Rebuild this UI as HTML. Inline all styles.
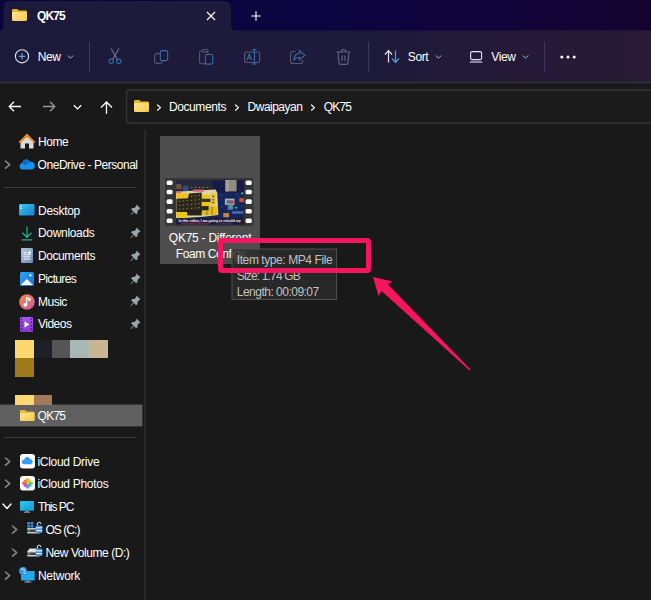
<!DOCTYPE html>
<html><head><meta charset="utf-8">
<style>
*{box-sizing:border-box;margin:0;padding:0}
html,body{width:651px;height:600px;overflow:hidden;background:#191919}
body{position:relative;font-family:"Liberation Sans","DejaVu Sans",sans-serif;color:#fff;font-size:12px}
.abs{position:absolute}
svg{overflow:visible}
#titlebar{left:0;top:0;width:651px;height:31px;background:linear-gradient(90deg,#0b0333 0%,#0d0436 50%,#130531 100%)}
#tab{left:3px;top:1px;width:228px;height:31px;background:#1d1a3b;border-radius:7px 7px 0 0}
#toolbar{left:0;top:31px;width:651px;height:50px;background:linear-gradient(90deg,#1c1a3a 0%,#1d1a3c 55%,#2a1a3e 100%)}
#tbline{left:0;top:82px;width:651px;height:1px;background:#2a2a2a}
.t{position:absolute;white-space:pre;line-height:16px;font-size:12px}
.sep{position:absolute;width:1px;background:#3d3a5a}

.hr{position:absolute;left:4px;width:132px;height:1px;background:#3a3a3a}
#vsplit{left:144px;top:130px;width:2px;height:470px;background:#282828}
#tile{left:160px;top:136px;width:100px;height:128px;background:#4d4d4d}
.pin{position:absolute;left:129.700px}
</style></head><body>
<svg class="abs" style="left:0;top:0" width="651" height="84" viewBox="0 0 651 84">
<defs><linearGradient id="gfold" x1="0" y1="0" x2="1" y2="1"><stop offset="0" stop-color="#fde48f"/><stop offset="1" stop-color="#f6c94c"/></linearGradient><linearGradient id="gtb" x1="0" x2="1" y1="0" y2="0"><stop offset="0" stop-color="#1c1a3a"/><stop offset="0.550" stop-color="#1e1a3b"/><stop offset="0.800" stop-color="#241a38"/><stop offset="1" stop-color="#291a35"/></linearGradient>
<linearGradient id="gtt" x1="0" x2="1" y1="0" y2="0"><stop offset="0" stop-color="#0b033a"/><stop offset="0.500" stop-color="#0c0440"/><stop offset="0.800" stop-color="#100338"/><stop offset="1" stop-color="#13032e"/></linearGradient></defs>
<rect x="0" y="0" width="651" height="81.700" fill="url(#gtb)"/>
<path d="M0 0H651V30.500H236Q231 30.500 231 25.500V8Q231 1 224 1H10.500Q3.500 1 3.500 8V26Q3.500 30.500 0 30.500Z" fill="url(#gtt)"/>
<rect x="0" y="81.800" width="651" height="1.400" fill="#353535"/>
</svg>
<svg class="abs" style="left:12px;top:9px" width="15" height="12" viewBox="0 0 16 13" preserveAspectRatio="none"><path d="M0 1.500a1.500 1.500 0 0 1 1.500-1.500h4l1.700 1.700h7.300a1.500 1.500 0 0 1 1.500 1.500v8.300a1.500 1.500 0 0 1-1.500 1.500h-13a1.500 1.500 0 0 1-1.500-1.500z" fill="#e9b630"/><path d="M0 4.200a1 1 0 0 1 1-1h14a1 1 0 0 1 1 1v7.300a1.500 1.500 0 0 1-1.500 1.500h-13a1.500 1.500 0 0 1-1.500-1.500z" fill="url(#gfold)"/></svg><svg class="abs" style="left:206px;top:10.500px" width="10" height="10" viewBox="0 0 10 10"><path d="M1 1l8 8M9 1l-8 8" stroke="#fff" stroke-width="1.100" fill="none"/></svg><svg class="abs" style="left:251px;top:10.500px" width="10" height="10" viewBox="0 0 10 10"><path d="M5 0.300v9.400M0.300 5h9.400" stroke="#fff" stroke-width="1.100" fill="none"/></svg><svg class="abs" style="left:14px;top:49px" width="16" height="15" viewBox="0 0 16 15"><circle cx="8" cy="7.300" r="6.600" fill="none" stroke="#e4e4ee" stroke-width="1.100"/><path d="M8 4v6.600M4.700 7.300h6.600" stroke="#5aa0e8" stroke-width="1.200"/></svg>
<svg class="abs" style="left:67px;top:54px" width="7" height="6" viewBox="0 0 7 6"><path d="M0.800 1.500l2.700 2.700 2.700-2.700" stroke="#b8b8c4" stroke-width="1" fill="none"/></svg>
<div class="sep" style="left:89px;top:41.500px;height:30px"></div>
<svg class="abs" style="left:107px;top:48px" width="16" height="17" viewBox="0 0 16 17" fill="none" stroke-width="1.100"><path d="M4 0.500l6.500 11M12 0.500l-6.500 11" stroke="#74728c"/><circle cx="4.300" cy="13.300" r="2.200" stroke="#336da8"/><circle cx="11.700" cy="13.300" r="2.200" stroke="#336da8"/></svg>
<svg class="abs" style="left:153.600px;top:49.800px" width="15" height="15" viewBox="0 0 15 15" fill="none" stroke-width="1.100"><rect x="0.600" y="3.600" width="7.500" height="9.800" rx="1.800" stroke="#595772"/><rect x="6.300" y="0.600" width="7.400" height="10" rx="1.800" stroke="#336da8" fill="#1c1a3a"/></svg>
<svg class="abs" style="left:199px;top:49px" width="15" height="16" viewBox="0 0 15 16" fill="none" stroke-width="1.100"><rect x="0.600" y="1.800" width="8.300" height="13" rx="1.800" stroke="#595772"/><rect x="3.200" y="0.500" width="5.800" height="2.400" rx="1" stroke="#595772" fill="#1c1a3a"/><rect x="6.400" y="5.500" width="7.400" height="9.600" rx="1.600" stroke="#336da8" fill="#1c1a3a"/></svg>
<svg class="abs" style="left:244px;top:50px" width="17" height="15" viewBox="0 0 17 15" fill="none" stroke-width="1.100"><rect x="0.600" y="2" width="15" height="10.500" rx="2" stroke="#595772"/><path d="M8.400 -0.500h4M8.400 14h4M10.400 -0.500v14.500" stroke="#336da8"/><path d="M3 10l2.300-6 2.300 6M3.800 8h3" stroke="#336da8"/></svg>
<svg class="abs" style="left:290px;top:50px" width="16" height="14" viewBox="0 0 16 14" fill="none" stroke-width="1.100"><path d="M5.500 1.500h-3a2 2 0 0 0-2 2v8a2 2 0 0 0 2 2h8a2 2 0 0 0 2-2v-1.500" stroke="#595772"/><path d="M9.500 0.800l5.500 4.500-5.500 4.500v-2.600c-3 0-4.500 1-5.500 2.800 0-3.500 2-6.300 5.500-6.500z" stroke="#336da8"/></svg>
<svg class="abs" style="left:336px;top:48.500px" width="15" height="16" viewBox="0 0 15 16" fill="none" stroke="#67657e" stroke-width="1.100"><path d="M0.500 3h14M5 3a2.500 2.500 0 0 1 5 0M2 3l1 11a1.500 1.500 0 0 0 1.500 1.400h6a1.500 1.500 0 0 0 1.500-1.400l1-11M6 6.500v5.500M9 6.500v5.500"/></svg>
<div class="sep" style="left:368px;top:41.500px;height:30px"></div>
<svg class="abs" style="left:384px;top:50px" width="17" height="13" viewBox="0 0 17 13" fill="none" stroke-width="1.200"><path d="M4.500 12.500v-11.500M1 4.500l3.500-3.800 3.500 3.800" stroke="#e4e4ee"/><path d="M11.500 0.500v11.500M8 8.500l3.500 3.800 3.500-3.800" stroke="#4aa3ea"/></svg>
<svg class="abs" style="left:434.500px;top:54px" width="7" height="6" viewBox="0 0 7 6"><path d="M0.800 1.500l2.700 2.700 2.700-2.700" stroke="#b8b8c4" stroke-width="1" fill="none"/></svg>
<svg class="abs" style="left:468.500px;top:51px" width="15" height="12" viewBox="0 0 15 12" fill="none" stroke="#e4e4ee" stroke-width="1.100"><rect x="1.600" y="0.600" width="11" height="8" rx="1.500"/><path d="M0.800 11h12.600"/></svg>
<svg class="abs" style="left:521.500px;top:54px" width="7" height="6" viewBox="0 0 7 6"><path d="M0.800 1.500l2.700 2.700 2.700-2.700" stroke="#b8b8c4" stroke-width="1" fill="none"/></svg>
<div class="sep" style="left:544px;top:41.500px;height:30px"></div>
<svg class="abs" style="left:560px;top:55px" width="16" height="4" viewBox="0 0 16 4" fill="#fff"><circle cx="1.800" cy="2" r="1.500"/><circle cx="8" cy="2" r="1.500"/><circle cx="14.200" cy="2" r="1.500"/></svg>
<svg class="abs" style="left:8px;top:101px" width="14" height="11" viewBox="0 0 14 11" fill="none" stroke="#fff" stroke-width="1.300"><path d="M13 5.500h-11.500M6 0.700l-4.800 4.800 4.800 4.800"/></svg>
<svg class="abs" style="left:41.500px;top:101px" width="14" height="11" viewBox="0 0 14 11" fill="none" stroke="#9a9a9a" stroke-width="1.300"><path d="M1 5.500h11.500M8 0.700l4.800 4.800-4.800 4.800"/></svg>
<svg class="abs" style="left:72.500px;top:103.500px" width="9" height="7" viewBox="0 0 9 7"><path d="M0.800 1.200l3.700 3.700 3.700-3.700" stroke="#fff" stroke-width="1.300" fill="none"/></svg>
<svg class="abs" style="left:100px;top:100.500px" width="13" height="13" viewBox="0 0 13 13" fill="none" stroke="#fff" stroke-width="1.300"><path d="M6.500 12.800v-11.500M1 6.500l5.500-5.500 5.500 5.500"/></svg>
<svg class="abs" style="left:120px;top:85px" width="531" height="44" viewBox="120 85 531 44"><rect x="126.500" y="90" width="540" height="33" rx="2.500" fill="#1b1b1b" stroke="#363636" stroke-width="1.400"/></svg>
<svg class="abs" style="left:134px;top:100px" width="15" height="12" viewBox="0 0 16 13" preserveAspectRatio="none"><path d="M0 1.500a1.500 1.500 0 0 1 1.500-1.500h4l1.700 1.700h7.300a1.500 1.500 0 0 1 1.500 1.500v8.300a1.500 1.500 0 0 1-1.500 1.500h-13a1.500 1.500 0 0 1-1.500-1.500z" fill="#e9b630"/><path d="M0 4.200a1 1 0 0 1 1-1h14a1 1 0 0 1 1 1v7.300a1.500 1.500 0 0 1-1.500 1.500h-13a1.500 1.500 0 0 1-1.500-1.500z" fill="url(#gfold)"/></svg><svg class="abs" style="left:155.7px;top:103.5px" width="6" height="7.2" viewBox="-1 -1 6 7.2"><path d="M0.500 0l3 2.6 -3 2.6" stroke="#fff" stroke-width="1.2" fill="none" stroke-linecap="round" stroke-linejoin="round"/></svg><svg class="abs" style="left:234.2px;top:103.5px" width="6" height="7.2" viewBox="-1 -1 6 7.2"><path d="M0.500 0l3 2.6 -3 2.6" stroke="#fff" stroke-width="1.2" fill="none" stroke-linecap="round" stroke-linejoin="round"/></svg><svg class="abs" style="left:310.2px;top:103.5px" width="6" height="7.2" viewBox="-1 -1 6 7.2"><path d="M0.500 0l3 2.6 -3 2.6" stroke="#fff" stroke-width="1.2" fill="none" stroke-linecap="round" stroke-linejoin="round"/></svg><div class="abs" id="vsplit"></div><div class="hr" style="top:187px"></div><div class="hr" style="top:437px"></div><svg class="abs" style="left:0;top:400px" width="150" height="30" viewBox="0 400 150 30"><rect x="-2" y="404.600" width="144.400" height="21.800" fill="#606060"/></svg><div class="abs" style="left:15.2px;top:339.7px;width:18.8px;height:18.3px;background:#fdd870"></div><div class="abs" style="left:34px;top:339.7px;width:18px;height:18.3px;background:#1c2128"></div><div class="abs" style="left:52px;top:339.7px;width:18px;height:18.3px;background:#555555"></div><div class="abs" style="left:70px;top:339.7px;width:19px;height:18.3px;background:#a8b8b5"></div><div class="abs" style="left:89px;top:339.7px;width:18.6px;height:18.3px;background:#c8b592"></div><div class="abs" style="left:15.2px;top:358px;width:18.8px;height:18.8px;background:#9e7a18"></div><div class="abs" style="left:15.2px;top:395px;width:18.8px;height:10px;background:#fdd870"></div><div class="abs" style="left:34px;top:395px;width:18px;height:10px;background:#a07a5a"></div><svg class="abs" style="left:3.6px;top:160.4px" width="7.2" height="9.2" viewBox="-1 -1 7.2 9.2"><path d="M0.500 0l4.2 3.6 -4.2 3.6" stroke="#858585" stroke-width="1.6" fill="none" stroke-linecap="round" stroke-linejoin="round"/></svg><svg class="abs" style="left:3.6px;top:456.79999999999995px" width="7.2" height="9.2" viewBox="-1 -1 7.2 9.2"><path d="M0.500 0l4.2 3.6 -4.2 3.6" stroke="#858585" stroke-width="1.6" fill="none" stroke-linecap="round" stroke-linejoin="round"/></svg><svg class="abs" style="left:3.6px;top:479.4px" width="7.2" height="9.2" viewBox="-1 -1 7.2 9.2"><path d="M0.500 0l4.2 3.6 -4.2 3.6" stroke="#858585" stroke-width="1.6" fill="none" stroke-linecap="round" stroke-linejoin="round"/></svg><svg class="abs" style="left:3.6px;top:571.0px" width="7.2" height="9.2" viewBox="-1 -1 7.2 9.2"><path d="M0.500 0l4.2 3.6 -4.2 3.6" stroke="#858585" stroke-width="1.6" fill="none" stroke-linecap="round" stroke-linejoin="round"/></svg><svg class="abs" style="left:11.4px;top:525.4px" width="7.2" height="9.2" viewBox="-1 -1 7.2 9.2"><path d="M0.500 0l4.2 3.6 -4.2 3.6" stroke="#858585" stroke-width="1.6" fill="none" stroke-linecap="round" stroke-linejoin="round"/></svg><svg class="abs" style="left:11.4px;top:548.0px" width="7.2" height="9.2" viewBox="-1 -1 7.2 9.2"><path d="M0.500 0l4.2 3.6 -4.2 3.6" stroke="#858585" stroke-width="1.6" fill="none" stroke-linecap="round" stroke-linejoin="round"/></svg><svg class="abs" style="left:2px;top:503px" width="10" height="7" viewBox="0 0 10 7"><path d="M1 1l4 4.500 4-4.500" stroke="#fff" stroke-width="1.400" fill="none" stroke-linecap="round" stroke-linejoin="round"/></svg><svg class="pin" style="top:204.39999999999998px" width="11" height="11" viewBox="0 0 11 11"><path d="M6.500 0.500l4 4-1.200 0.600-1.800 1.800 0 2.300-1.500 1-2-2.300-3 3 -0.500-0.500 3-3-2.300-2 1-1.500 2.300 0 1.800-1.800z" fill="#9ba4a9"/></svg><svg class="pin" style="top:226.7px" width="11" height="11" viewBox="0 0 11 11"><path d="M6.500 0.500l4 4-1.200 0.600-1.800 1.800 0 2.300-1.500 1-2-2.300-3 3 -0.500-0.500 3-3-2.300-2 1-1.500 2.300 0 1.800-1.800z" fill="#9ba4a9"/></svg><svg class="pin" style="top:249.7px" width="11" height="11" viewBox="0 0 11 11"><path d="M6.500 0.500l4 4-1.200 0.600-1.800 1.800 0 2.300-1.500 1-2-2.300-3 3 -0.500-0.500 3-3-2.300-2 1-1.500 2.300 0 1.800-1.800z" fill="#9ba4a9"/></svg><svg class="pin" style="top:273.0px" width="11" height="11" viewBox="0 0 11 11"><path d="M6.500 0.500l4 4-1.200 0.600-1.800 1.800 0 2.300-1.500 1-2-2.300-3 3 -0.500-0.500 3-3-2.300-2 1-1.500 2.300 0 1.800-1.800z" fill="#9ba4a9"/></svg><svg class="pin" style="top:295.3px" width="11" height="11" viewBox="0 0 11 11"><path d="M6.500 0.500l4 4-1.200 0.600-1.800 1.800 0 2.300-1.500 1-2-2.300-3 3 -0.500-0.500 3-3-2.300-2 1-1.500 2.300 0 1.800-1.800z" fill="#9ba4a9"/></svg><svg class="pin" style="top:317.9px" width="11" height="11" viewBox="0 0 11 11"><path d="M6.500 0.500l4 4-1.200 0.600-1.800 1.800 0 2.300-1.500 1-2-2.300-3 3 -0.500-0.500 3-3-2.300-2 1-1.500 2.300 0 1.800-1.800z" fill="#9ba4a9"/></svg><svg class="abs" style="left:19px;top:134px" width="16" height="15.500" viewBox="0 0 16 15.500"><path d="M1.500 8v6.500h4.500v-5h4v5h4.500v-6.500l-6.500-5.500z" fill="#d9d9d9"/><path d="M0.300 8.600l7.700-7.600 7.700 7.600" stroke="#f58a1f" stroke-width="2" fill="none" stroke-linejoin="miter"/></svg>
<svg class="abs" style="left:19px;top:159px" width="16" height="11" viewBox="0 0 16 11"><path d="M3.500 10.500a3.300 3.300 0 0 1-0.300-6.500 4.300 4.300 0 0 1 8-1.200 3.900 3.900 0 0 1 1.300 7.700z" fill="#1b90ea"/><path d="M3.200 4a4.300 4.300 0 0 1 8-1.200l-5 3.500z" fill="#0f6cc9"/></svg>
<svg class="abs" style="left:19px;top:204px" width="15.500" height="11.500" viewBox="0 0 15.500 11.500"><defs><linearGradient id="gd" x1="0" y1="0" x2="1" y2="1"><stop offset="0" stop-color="#35c6ee"/><stop offset="1" stop-color="#1a7fd2"/></linearGradient></defs><rect width="15.500" height="11.500" rx="1.200" fill="url(#gd)"/><rect x="1.300" y="1.500" width="1.500" height="1.200" fill="#dff"/><rect x="1.300" y="3.700" width="1.500" height="1.200" fill="#dff"/></svg>
<svg class="abs" style="left:21px;top:225.500px" width="12" height="15" viewBox="0 0 12 15" fill="none" stroke="#21b088" stroke-width="1.300"><path d="M6 0.500v10.500M1.500 6.800l4.500 4.500 4.500-4.500M0.800 13.800h10.400"/></svg>
<svg class="abs" style="left:21px;top:248px" width="12" height="15" viewBox="0 0 12 15"><defs><linearGradient id="gdoc" x1="0" y1="0" x2="1" y2="1"><stop offset="0" stop-color="#b3c6e0"/><stop offset="1" stop-color="#6c89b6"/></linearGradient></defs><rect width="12" height="15" rx="1.200" fill="url(#gdoc)"/><path d="M2.500 4.500h3.500M2.500 6.700h7M2.500 8.900h7M2.500 11.100h7" stroke="#fff" stroke-width="0.900"/><rect x="7" y="3.500" width="2.800" height="2.200" fill="#fff"/></svg>
<svg class="abs" style="left:20px;top:271.500px" width="14" height="14" viewBox="0 0 14 14"><defs><linearGradient id="gp" x1="0" y1="0" x2="1" y2="1"><stop offset="0" stop-color="#2fa4f4"/><stop offset="1" stop-color="#1573d6"/></linearGradient></defs><rect width="14" height="14" rx="1.500" fill="url(#gp)"/><path d="M1 13l5.800-6 6.200 6z" fill="#fff"/><circle cx="10.500" cy="3.300" r="1.100" fill="#fff"/></svg>
<svg class="abs" style="left:19px;top:293.500px" width="16" height="16" viewBox="0 0 16 16"><defs><linearGradient id="gm" x1="0" y1="0" x2="1" y2="1"><stop offset="0" stop-color="#f4894a"/><stop offset="1" stop-color="#c9599a"/></linearGradient></defs><circle cx="8" cy="8" r="7.800" fill="url(#gm)"/><circle cx="6.300" cy="10.800" r="1.900" fill="#fff"/><path d="M7.600 10.800v-7.300l3.400 1.200v1.800l-2.400-0.800" fill="none" stroke="#fff" stroke-width="1.100"/></svg>
<svg class="abs" style="left:20.300px;top:316.500px" width="13" height="15" viewBox="0 0 13 15"><defs><linearGradient id="gv" x1="0" y1="0" x2="0" y2="1"><stop offset="0" stop-color="#a458ee"/><stop offset="1" stop-color="#8638c9"/></linearGradient></defs><rect width="13" height="15" rx="1.200" fill="url(#gv)"/><path d="M4.500 4.500l5 3-5 3z" fill="#fff"/><g fill="#3b1470"><rect x="1" y="1.500" width="1.300" height="1.300"/><rect x="1" y="4.700" width="1.300" height="1.300"/><rect x="1" y="7.900" width="1.300" height="1.300"/><rect x="1" y="11.100" width="1.300" height="1.300"/><rect x="10.700" y="1.500" width="1.300" height="1.300"/><rect x="10.700" y="4.700" width="1.300" height="1.300"/><rect x="10.700" y="7.900" width="1.300" height="1.300"/><rect x="10.700" y="11.100" width="1.300" height="1.300"/></g></svg>
<svg class="abs" style="left:19.6px;top:409.5px" width="14.5" height="11" viewBox="0 0 16 13" preserveAspectRatio="none"><path d="M0 1.500a1.500 1.500 0 0 1 1.500-1.500h4l1.700 1.700h7.300a1.500 1.500 0 0 1 1.500 1.500v8.300a1.500 1.500 0 0 1-1.500 1.500h-13a1.500 1.500 0 0 1-1.500-1.500z" fill="#e9b630"/><path d="M0 4.200a1 1 0 0 1 1-1h14a1 1 0 0 1 1 1v7.300a1.500 1.500 0 0 1-1.500 1.500h-13a1.500 1.500 0 0 1-1.500-1.500z" fill="url(#gfold)"/></svg><svg class="abs" style="left:19.500px;top:453.500px" width="15" height="14.500" viewBox="0 0 15 14.500"><rect width="15" height="14.500" rx="3" fill="#fdfdfd"/><path d="M4.300 10.300a2.400 2.400 0 0 1-0.200-4.800 3.200 3.200 0 0 1 6-0.600 2.800 2.800 0 0 1 0.800 5.400z" fill="#3a9cf2"/></svg>
<svg class="abs" style="left:19.500px;top:476.300px" width="15" height="14.500" viewBox="0 0 15 14.500"><rect width="15" height="14.500" rx="3" fill="#fdfdfd"/><g opacity="0.900"><ellipse cx="7.500" cy="4.300" rx="1.700" ry="2.500" fill="#f5a623"/><ellipse cx="7.500" cy="10.200" rx="1.700" ry="2.500" fill="#4a90e2"/><ellipse cx="4.500" cy="7.250" rx="2.500" ry="1.700" fill="#e0503a"/><ellipse cx="10.500" cy="7.250" rx="2.500" ry="1.700" fill="#6fc24a"/><circle cx="5.300" cy="5.100" r="1.700" fill="#ef7b2a"/><circle cx="9.700" cy="5.100" r="1.700" fill="#c8d42a"/><circle cx="5.300" cy="9.400" r="1.700" fill="#b050c8"/><circle cx="9.700" cy="9.400" r="1.700" fill="#30b8a8"/></g></svg>
<svg class="abs" style="left:19.800px;top:500.500px" width="14" height="12" viewBox="0 0 14 12"><defs><linearGradient id="gpc" x1="0" y1="0" x2="1" y2="1"><stop offset="0" stop-color="#2ccaf0"/><stop offset="1" stop-color="#1795d8"/></linearGradient></defs><rect width="14" height="9.800" rx="0.800" fill="url(#gpc)"/><rect x="5.500" y="9.800" width="3" height="1.200" fill="#7a8894"/><rect x="3.800" y="10.800" width="6.400" height="0.900" fill="#9aa8b4"/></svg>
<svg class="abs" style="left:26.800px;top:522px" width="15.500" height="12" viewBox="0 0 15.500 12"><g fill="#2a8de8"><rect x="0.300" y="0" width="2.700" height="2.500"/><rect x="3.600" y="0" width="2.700" height="2.500"/><rect x="0.300" y="3.100" width="2.700" height="2.500"/><rect x="3.600" y="3.100" width="2.700" height="2.500"/></g><rect x="0" y="6" width="13" height="5.500" rx="1" fill="#c9ccd1"/><rect x="0" y="7.500" width="13" height="2.500" fill="#3c3f44"/><rect x="1.200" y="8" width="2" height="1.300" fill="#3fd34a"/><path d="M10.300 3.500v-1.500a1.800 1.800 0 0 1 3.600 0" stroke="#e8eef5" stroke-width="1" fill="none"/><rect x="8.800" y="3.500" width="6.500" height="7.500" rx="0.800" fill="#3a8fe0"/><rect x="8.800" y="5.200" width="6.500" height="1.200" fill="#e8eef5"/><rect x="8.800" y="8" width="6.500" height="1.200" fill="#e8eef5"/></svg>
<svg class="abs" style="left:26.800px;top:544.800px" width="15.500" height="12" viewBox="0 0 15.500 12"><path d="M0 7l2.500-3.500h8l2.500 3.500z" fill="#e4e6ea"/><rect x="0" y="6.500" width="13" height="5" rx="1" fill="#c9ccd1"/><rect x="0" y="7.500" width="13" height="2.500" fill="#3c3f44"/><rect x="1.200" y="8" width="2" height="1.300" fill="#3fd34a"/><path d="M10.300 3.500v-1.500a1.800 1.800 0 0 1 3.600 0" stroke="#e8eef5" stroke-width="1" fill="none"/><rect x="8.800" y="3.500" width="6.500" height="7.500" rx="0.800" fill="#3a8fe0"/><rect x="8.800" y="5.200" width="6.500" height="1.200" fill="#e8eef5"/><rect x="8.800" y="8" width="6.500" height="1.200" fill="#e8eef5"/></svg>
<svg class="abs" style="left:18.800px;top:567px" width="16" height="16" viewBox="0 0 16 16"><rect x="2" y="4" width="13.700" height="9.500" rx="0.800" fill="#22a8e6"/><rect x="7" y="13.500" width="3.500" height="1.200" fill="#7a8894"/><rect x="5.300" y="14.600" width="7" height="0.900" fill="#9aa8b4"/><circle cx="4" cy="4" r="3.900" fill="#3a96e4"/><path d="M2 2.500c1.500-1 3-0.500 3.500 0.500s-1 1.500-0.500 2.500 1.500 1 2 0.500" stroke="#d6f0ff" stroke-width="1" fill="none"/></svg>
<div class="abs" id="tile"></div><svg class="abs" style="left:165.400px;top:178px" width="88.400" height="48" viewBox="0 0 88.400 48"><rect x="0" y="0" width="88.400" height="48" rx="2.500" fill="#353535"/><rect x="1.600" y="2.5" width="6" height="4.600" rx="1.500" fill="#fafafa"/><rect x="80.600" y="2.5" width="6.200" height="4.600" rx="1.500" fill="#fafafa"/><rect x="1.600" y="11.7" width="6" height="4.600" rx="1.500" fill="#fafafa"/><rect x="80.600" y="11.7" width="6.200" height="4.600" rx="1.500" fill="#fafafa"/><rect x="1.600" y="21.3" width="6" height="4.600" rx="1.500" fill="#fafafa"/><rect x="80.600" y="21.3" width="6.200" height="4.600" rx="1.500" fill="#fafafa"/><rect x="1.600" y="30.900000000000002" width="6" height="4.600" rx="1.500" fill="#fafafa"/><rect x="80.600" y="30.900000000000002" width="6.200" height="4.600" rx="1.500" fill="#fafafa"/><rect x="1.600" y="40.5" width="6" height="4.600" rx="1.500" fill="#fafafa"/><rect x="80.600" y="40.5" width="6.200" height="4.600" rx="1.500" fill="#fafafa"/></svg><svg class="abs" style="left:175.500px;top:179.800px" width="67.800" height="44.600" viewBox="15 18 610 400" preserveAspectRatio="none">
<defs><filter id="bl" x="-5%" y="-5%" width="110%" height="110%"><feGaussianBlur stdDeviation="7"/></filter>
<clipPath id="cp"><rect x="15" y="18" width="610" height="400"/></clipPath></defs>
<g clip-path="url(#cp)"><rect x="15" y="18" width="610" height="400" fill="#18244f"/>
<g filter="url(#bl)">
<rect x="0" y="0" width="340" height="125" fill="#262a3c"/>
<rect x="18" y="55" width="45" height="45" fill="#7a5040"/>
<rect x="75" y="70" width="55" height="50" fill="#34487a"/>
<rect x="130" y="68" width="200" height="38" fill="#2b2b2a"/>
<g fill="#8a8468"><rect x="150" y="80" width="14" height="9"/><rect x="185" y="80" width="14" height="9"/><rect x="220" y="80" width="14" height="9"/><rect x="255" y="80" width="14" height="9"/><rect x="290" y="80" width="14" height="9"/></g>
<rect x="340" y="0" width="300" height="135" fill="#161f45"/>
<rect x="460" y="10" width="100" height="110" fill="#8f8d7e"/>
<rect x="460" y="10" width="30" height="110" fill="#a5a393"/>
<rect x="395" y="130" width="240" height="235" fill="#19285c"/>
<g fill="#4a66b0"><rect x="420" y="150" width="10" height="8"/><rect x="560" y="140" width="10" height="8"/><rect x="600" y="250" width="10" height="8"/><rect x="420" y="260" width="10" height="8"/><rect x="570" y="160" width="8" height="8"/></g>
<polygon points="10,124 370,104 386,130 396,332 262,347 10,364" fill="#dfd3a6"/>
<rect x="170" y="104" width="95" height="20" fill="#d8688c"/>
<rect x="16" y="120" width="46" height="20" fill="#e0708c"/>
<rect x="18" y="136" width="104" height="46" fill="#f0c418"/>
<polygon points="18,186 122,182 132,140 246,130 250,300 118,318 18,310" fill="#29271b"/>
<g fill="#84701e">
<rect x="40" y="205" width="14" height="11"/><rect x="75" y="200" width="14" height="11"/><rect x="110" y="196" width="14" height="11"/><rect x="148" y="160" width="14" height="11"/><rect x="183" y="155" width="14" height="11"/><rect x="216" y="150" width="14" height="11"/>
<rect x="40" y="240" width="14" height="11"/><rect x="75" y="236" width="14" height="11"/><rect x="110" y="232" width="14" height="11"/><rect x="148" y="196" width="14" height="11"/><rect x="183" y="192" width="14" height="11"/><rect x="216" y="188" width="14" height="11"/>
<rect x="40" y="276" width="14" height="11"/><rect x="75" y="272" width="14" height="11"/><rect x="110" y="268" width="14" height="11"/><rect x="148" y="232" width="14" height="11"/><rect x="183" y="228" width="14" height="11"/><rect x="216" y="224" width="14" height="11"/>
<rect x="148" y="268" width="14" height="11"/><rect x="183" y="264" width="14" height="11"/><rect x="216" y="260" width="14" height="11"/>
</g>
<rect x="250" y="150" width="72" height="36" fill="#f0c21a"/>
<rect x="246" y="186" width="80" height="30" fill="#3a3620"/>
<rect x="330" y="138" width="42" height="98" fill="#ecc01e"/>
<g fill="#3a3418"><rect x="343" y="160" width="14" height="10"/><rect x="343" y="190" width="14" height="10"/><rect x="343" y="215" width="14" height="10"/></g>
<rect x="245" y="215" width="82" height="36" fill="#f0c21a"/>
<rect x="250" y="252" width="60" height="40" fill="#2b2818"/>
<rect x="310" y="250" width="76" height="82" fill="#e8bc1e"/>
<rect x="250" y="292" width="62" height="42" fill="#e8bc1e"/>
<g fill="#6a5a18"><rect x="336" y="255" width="6" height="75"/><rect x="290" y="295" width="6" height="38"/></g>
<rect x="18" y="305" width="98" height="52" fill="#f0c418"/>
<rect x="116" y="296" width="130" height="40" fill="#222016"/>
<rect x="455" y="185" width="86" height="56" fill="#a6babf"/>
<rect x="470" y="200" width="60" height="30" fill="#5a6a78"/>
<rect x="495" y="210" width="45" height="16" fill="#d83a2a"/>
<rect x="480" y="240" width="50" height="45" fill="#5a7aa8"/>
<rect x="500" y="250" width="22" height="20" fill="#3ab070"/>
<rect x="545" y="258" width="22" height="16" fill="#3ab070"/>
<rect x="600" y="130" width="20" height="16" fill="#3ab070"/>
<rect x="585" y="180" width="45" height="36" fill="#cf4f2a"/>
<rect x="440" y="314" width="52" height="38" fill="#c8803a"/>
<rect x="520" y="298" width="100" height="22" fill="#4a6ab8"/>
<rect x="0" y="360" width="640" height="70" fill="#1e1f3a"/>
<rect x="60" y="398" width="250" height="25" fill="#5a2850"/>
<rect x="400" y="398" width="120" height="25" fill="#3a2a5a"/>
</g>
<text x="318" y="393" style="font-family:'Liberation Sans',sans-serif;font-size:36px;font-weight:bold;paint-order:stroke" stroke="#1a1a2a" stroke-width="5" fill="#f6f6f6" text-anchor="middle" textLength="560" lengthAdjust="spacingAndGlyphs">In this video, I am going to rebuild my</text>
</g></svg>
<div class="t" style="left:36.9px;top:7.5px;letter-spacing:-0.815px;font-weight:bold">QK75</div><div class="t" style="left:37.8px;top:48.9px;letter-spacing:-0.439px">New</div><div class="t" style="left:407.8px;top:49.0px;letter-spacing:-0.379px">Sort</div><div class="t" style="left:491.2px;top:49.0px;letter-spacing:-0.349px">View</div><div class="t" style="left:169.0px;top:98.8px;letter-spacing:-0.411px">Documents</div><div class="t" style="left:247.6px;top:98.8px;letter-spacing:-0.519px">Dwaipayan</div><div class="t" style="left:323.8px;top:98.8px;letter-spacing:-0.822px">QK75</div><div class="t" style="left:38.0px;top:134.1px;letter-spacing:-0.404px">Home</div><div class="t" style="left:37.6px;top:156.7px;letter-spacing:-0.459px">OneDrive - Personal</div><div class="t" style="left:38.0px;top:202.8px;letter-spacing:-0.290px">Desktop</div><div class="t" style="left:38.0px;top:225.1px;letter-spacing:-0.319px">Downloads</div><div class="t" style="left:38.0px;top:248.1px;letter-spacing:-0.411px">Documents</div><div class="t" style="left:38.0px;top:271.4px;letter-spacing:-0.670px">Pictures</div><div class="t" style="left:38.0px;top:293.7px;letter-spacing:-0.509px">Music</div><div class="t" style="left:38.0px;top:316.3px;letter-spacing:-0.514px">Videos</div><div class="t" style="left:37.6px;top:407.8px;letter-spacing:-0.772px">QK75</div><div class="t" style="left:37.4px;top:453.5px;letter-spacing:-0.288px">iCloud Drive</div><div class="t" style="left:37.4px;top:476.1px;letter-spacing:-0.286px">iCloud Photos</div><div class="t" style="left:37.9px;top:498.8px;letter-spacing:-1.027px">This PC</div><div class="t" style="left:45.4px;top:522.1px;letter-spacing:-0.939px">OS (C:)</div><div class="t" style="left:45.4px;top:544.7px;letter-spacing:-0.447px">New Volume (D:)</div><div class="t" style="left:37.9px;top:567.7px;letter-spacing:-0.274px">Network</div><div class="t" style="left:168.8px;top:229.6px;letter-spacing:-0.249px">QK75 - Different</div><div class="t" style="left:175.8px;top:245.9px;letter-spacing:-0.417px">Foam Configs</div><svg class="abs" style="left:225px;top:240px" width="120" height="65" viewBox="225 240 120 65"><rect x="232" y="249" width="104.600" height="50.400" fill="#2b2b2b" fill-opacity="0.830" stroke="#505050" stroke-width="1"/></svg><div class="t" style="left:236.8px;top:251.7px;letter-spacing:-0.420px;color:#c2c2c2">Item type: MP4 File</div><div class="t" style="left:236.8px;top:267.7px;letter-spacing:-0.842px;color:#c2c2c2">Size: 1.74 GB</div><div class="t" style="left:236.8px;top:283.5px;letter-spacing:-0.512px;color:#c2c2c2">Length: 00:09:07</div><div class="abs" style="left:217.700px;top:238.300px;width:153.500px;height:34.300px;border:5.500px solid #f4155f;border-radius:4px"></div>
<svg class="abs" style="left:0;top:0" width="651" height="600" viewBox="0 0 651 600"><polygon points="373,277 392.400,281.400 388,284.400 470.600,369.600 469.600,370.600 381.600,291 378.600,296" fill="#f8145f"/></svg>
</body></html>
